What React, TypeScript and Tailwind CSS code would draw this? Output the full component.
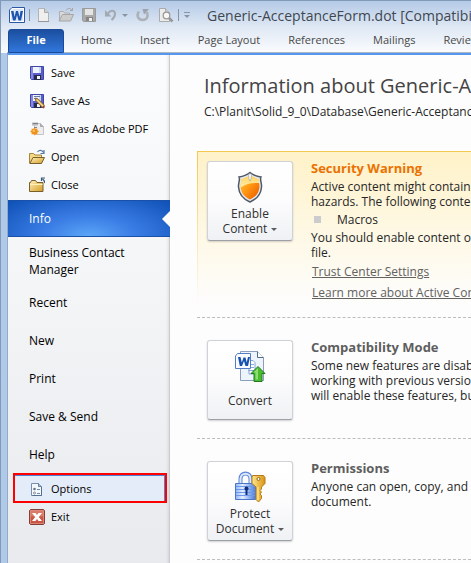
import type { ReactNode } from "react";

const tabs = ["Home", "Insert", "Page Layout", "References", "Mailings", "Review"];

function WordLogo() {
  return (
    <svg className="shrink-0" width="16" height="16" viewBox="0 0 16 16" aria-hidden="true">
      <path d="M3 .5h12.500v15H.5V3z" fill="#fff" stroke="#2b57a5" />
      <path d="M3.500 2H14v12H2V3.500z" fill="#dbe8fa" />
      <path d="M2 4h2.500l1 6 1.500-6h2l1.500 6 1-6H14l-2 9.500H9.500L8 8l-1.500 5.500H4z" fill="#1d55ae" />
    </svg>
  );
}

function NewIcon() {
  return (
    <svg width="16" height="16" viewBox="0 0 16 16" aria-hidden="true">
      <path d="M3.500 1.500h6l4 4v9h-10z" fill="#efefef" stroke="#b4b4b4" />
      <path d="M9.500 1.500v4h4" fill="#d0d0d0" stroke="#a9a9a9" />
      <path d="M3 14.500h11" stroke="#969696" />
    </svg>
  );
}

function GreyFolderIcon() {
  return (
    <svg width="16" height="16" viewBox="0 0 16 16" aria-hidden="true">
      <path d="M1.500 13.500v-9h4l1 1.500h5v3" fill="#dadada" stroke="#adadad" />
      <path d="M1 14l3.500-6.500h11l-3 6.500z" fill="#cccccc" stroke="#a5a5a5" />
      <path d="M8 3.500c2-3 5-2.500 6 0M12 3.500h2.500V1" fill="none" stroke="#a5a5a5" />
    </svg>
  );
}

function GreyDiskIcon() {
  return (
    <svg width="16" height="16" viewBox="0 0 16 16" aria-hidden="true">
      <path d="M1.500 1.500h13v13h-12l-1-1z" fill="#a9a9a9" stroke="#9a9a9a" />
      <path d="M4 2h8v6H4z" fill="#e4e4e4" />
      <path d="M5 10h7v4H5z" fill="#858585" />
      <path d="M8 11h3v3H8z" fill="#f0f0f0" />
    </svg>
  );
}

function UndoIcon() {
  return (
    <svg width="16" height="16" viewBox="0 0 16 16" aria-hidden="true">
      <path d="M3.500 7C6 3 10.500 2.500 11 6.500c.2 2.500-1 4.500-3.500 6.500" fill="none" stroke="#a3a9b1" strokeWidth="2" />
      <path d="M1 3v6.500h6.500z" fill="#a3a9b1" />
    </svg>
  );
}

function RedoIcon() {
  return (
    <svg width="16" height="16" viewBox="0 0 16 16" aria-hidden="true">
      <path d="M4 4.500C1 8 3 13 7.500 13c4.500 0 6.500-4 4-8" fill="none" stroke="#adb2b9" strokeWidth="2.500" />
      <path d="M7.500 2H14L9 7.500z" fill="#9da3ac" />
    </svg>
  );
}

function PreviewIcon() {
  return (
    <svg width="16" height="16" viewBox="0 0 16 16" aria-hidden="true">
      <path d="M1.500 1.500h6l4 4v9h-10z" fill="#ececec" stroke="#ababab" />
      <path d="M7.500 1.500v4h4" fill="#d0d0d0" stroke="#ababab" />
      <path d="M10.500 10.500l4 4" stroke="#989898" strokeWidth="2.500" />
      <circle cx="8.500" cy="8.500" r="3.300" fill="#f7f7f7" stroke="#9a9a9a" strokeWidth="1.300" />
    </svg>
  );
}

function Disk({ pencil = false }: { pencil?: boolean }) {
  return (
    <svg width="16" height="16" viewBox="0 0 16 16" aria-hidden="true">
      <path d="M1.500 1.500h13v13h-12l-1-1z" fill="#5b5ec8" stroke="#4146a6" />
      <path d="M2 2h2v12H2z" fill="#8589df" />
      <path d="M4 2h8v6H4z" fill="#eef3fc" />
      <path d="M10 2h2v6h-2z" fill="#c9d8ee" />
      <path d="M5 10h7v5H5z" fill="#272b50" />
      <path d="M8 11h3v3H8z" fill="#f4f4f4" />
      {pencil && (
        <g>
          <path d="M5 3.500h6M5 5.500h3" stroke="#667ba5" />
          <path d="M6 5l3 .8 6.500 6.500-2.200 2.200L6.800 8z" fill="#d9ae5c" stroke="#70531f" strokeWidth=".7" />
          <path d="M8 7l6 6" stroke="#f8dc8f" />
          <path d="M13 14.500l2-2 1 1.500-1.500 1.500z" fill="#9b403c" />
        </g>
      )}
    </svg>
  );
}

function PdfIcon() {
  return (
    <svg width="16" height="16" viewBox="0 0 16 16" aria-hidden="true">
      <path d="M5.500 2.500h6l3 3v8h-9z" fill="#ededee" stroke="#c4c4c8" />
      <path d="M11.500 2.500v3h3" fill="#b9babd" stroke="#a6a6aa" />
      <path d="M3 1.500h6v3H3z" fill="#b9b9bd" />
      <path d="M4 2.500h5M5 6.500h3" stroke="#818188" />
      <path d="M5.500 6.500l1 1.600 2-.6-.2 2 1.900 1-1.900 1 .2 2-2-.6-1 1.700-1-1.700-2 .6.200-2-1.900-1 1.900-1-.2-2 2 .6z" fill="#f7a529" />
      <circle cx="5.500" cy="10.500" r="3" fill="#ef9020" />
      <circle cx="4.800" cy="9.700" r="1.300" fill="#fbc361" />
    </svg>
  );
}

function Folder({ open = false }: { open?: boolean }) {
  return (
    <svg width="16" height="16" viewBox="0 0 16 16" aria-hidden="true">
      <defs>
        <linearGradient id="folder" x2="1" y2="1">
          <stop stopColor="#fff1bd" />
          <stop offset="1" stopColor="#d49d25" />
        </linearGradient>
      </defs>
      {open ? (
        <>
          <path d="M.5 14V4.500h4L6 6h6.500v4" fill="#f5d982" stroke="#a38443" />
          <path d="M.8 14.500L4 8.500h11.500l-3 6z" fill="url(#folder)" stroke="#79602a" />
          <path d="M8.500 3c2-2.500 4.500-2 6 .5M11.500 4.500H15V1" fill="none" stroke="#567ba9" strokeWidth="1.200" />
        </>
      ) : (
        <>
          <path d="M.5 14.500v-9h1l1-2h4l1.500 2h6v9z" fill="url(#folder)" stroke="#79602a" />
          <path d="M1 7.500h12.500" stroke="#fff0b9" />
          <path d="M15.500 6c.5-1.500 0-2.500-2-4M12.500 4V1H16" fill="none" stroke="#38597f" strokeWidth="1.200" />
        </>
      )}
    </svg>
  );
}

function OptionsIcon() {
  return (
    <svg width="16" height="16" viewBox="0 0 16 16" aria-hidden="true">
      <path d="M2.500 2.500h7l3 3v9h-10z" fill="#f5f9fd" stroke="#7890ad" />
      <path d="M9.500 2.500v3h3" fill="#adc0d7" stroke="#65809f" />
      <path d="M12.500 6v8.500h-9" fill="none" stroke="#536f91" />
      <circle cx="5.500" cy="8" r="1.300" fill="#66758a" />
      <circle cx="5.500" cy="12" r="1" fill="#fff" stroke="#66758a" strokeWidth=".8" />
      <path d="M8 8.500h3M8 12.500h3" stroke="#758aa3" />
    </svg>
  );
}

function ExitIcon() {
  return (
    <svg width="16" height="16" viewBox="0 0 16 16" aria-hidden="true">
      <path d="M1.500.5h13l1 1v13l-1 1h-13l-1-1v-13z" fill="#c95743" stroke="#853d37" />
      <path d="M1.500 1.500h13v6h-13z" fill="#d97b69" />
      <path d="M1.500 1.500h13v13h-13z" fill="none" stroke="#e6a092" strokeWidth=".6" />
      <path d="M3 4h3.500L8 6l1.500-2H13L9.800 8l3.200 4H9.500L8 10l-1.500 2H3l3.200-4z" fill="#fff" />
    </svg>
  );
}

function ShieldIcon() {
  return (
    <svg width="32" height="32" viewBox="0 0 32 32" aria-hidden="true">
      <defs>
        <linearGradient id="shield" x2="1" y2="1">
          <stop stopColor="#ffcf3a" />
          <stop offset=".5" stopColor="#ff9310" />
          <stop offset="1" stopColor="#e65500" />
        </linearGradient>
        <linearGradient id="shieldTop" x2="0" y2="1">
          <stop stopColor="#ffd35a" />
          <stop offset="1" stopColor="#ffedaa" />
        </linearGradient>
      </defs>
      <path d="M16 1.500c-3 2.500-7 4-11 4.500 1.500 3-1 6-.5 10C5 23 9 28 16 31c7-3 11-8 11.500-15 .5-4-2-7-.5-10-4-.5-8-2-11-4.500z" fill="#e6e8ee" stroke="#505968" strokeWidth="1.500" />
      <path d="M16 4c-3 2.500-6 3.800-9 4 .7 3-.8 5-.4 8.500C7 22 10.500 26 16 28.500c5.500-2.500 9-6.500 9.400-12 .4-3.500-1.100-5.500-.4-8.500-3-.2-6-1.500-9-4z" fill="url(#shield)" />
      <path d="M16 4c-3 2.500-6 3.800-9 4 .7 3-.8 5-.4 8.500 5.500-4 12-5 18.800-4.500-.5-1.500-.6-2.500-.4-4-3-.2-6-1.500-9-4z" fill="url(#shieldTop)" />
      <path d="M14.500 3h3l-.5 5-1 2-1-2z" fill="#fff" stroke="#939baa" strokeWidth=".6" />
    </svg>
  );
}

function ConvertIcon() {
  return (
    <svg width="32" height="32" viewBox="0 0 32 32" aria-hidden="true">
      <path d="M6.500 1.500h17l6 6v23h-23z" fill="#eef4fc" stroke="#8b9fbd" />
      <path d="M23.500 1.500v6h6" fill="#fff" stroke="#536985" />
      <path d="M15 10.500h4l2 2V24h-6z" fill="#fff" stroke="#83a4d3" />
      <path d="M17 14.500h3M17 17.500h3M14 20.500h6" stroke="#8aacda" />
      <path d="M3.500 3.500h13v15h-15V6z" fill="#f9fbff" stroke="#527fc4" />
      <path d="M4 7h2.500l1.300 5.500L9.500 7.500h2l1.200 5L14 7h2l-2 9h-2.500L10 11 8 16H5.800z" fill="#1651ad" />
      <path d="M24 16.500l7 7h-3v8h-8v-8h-3z" fill="#49bd2d" stroke="#217a22" />
      <path d="M24 18l-4.500 4.500h2v7H24z" fill="#91dd72" />
    </svg>
  );
}

function LockKeyIcon() {
  return (
    <svg width="32" height="32" viewBox="0 0 32 32" aria-hidden="true">
      <defs>
        <linearGradient id="lock">
          <stop stopColor="#8fb5fb" />
          <stop offset=".35" stopColor="#e4eeff" />
          <stop offset="1" stopColor="#477be0" />
        </linearGradient>
        <linearGradient id="key">
          <stop stopColor="#ffe88d" />
          <stop offset="1" stopColor="#d89410" />
        </linearGradient>
      </defs>
      <path d="M6.500 13V8c0-7.500 10-7.500 10 0v5" fill="none" stroke="#5c86d4" strokeWidth="4" />
      <path d="M6.500 13V8c0-7 10-7 10 0v5" fill="none" stroke="#dbe8ff" strokeWidth="2" />
      <path d="M1.500 12.500h20v16h-20z" fill="url(#lock)" stroke="#4a76c6" />
      <path d="M2 15.500h19M2 18.500h19M2 21.500h19M2 24.500h19" stroke="#6b98e7" />
      <circle cx="12.500" cy="17.500" r="2" fill="#102e7b" />
      <path d="M11.500 18h2v6h-2z" fill="#102e7b" />
      <path d="M18.500 4.500h11l1.500 2v6L27.500 16v2L26 19.500l1.500 1.500-1.500 2 1.500 1.500v3L24.500 31 22 28.500V16l-4-3.500v-6z" fill="url(#key)" stroke="#b57a1c" />
      <path d="M24 16v13" stroke="#fff0a0" />
      <circle cx="24.500" cy="8" r="1.500" fill="#fff" stroke="#9b6717" />
    </svg>
  );
}

function Caret() {
  return <span className="ml-1 inline-block border-x-[3px] border-t-[3px] border-x-transparent border-t-[#5b5b5b] align-middle" />;
}

function TileButton({ icon, children }: { icon: ReactNode; children: ReactNode }) {
  return (
    <button className="flex h-20 w-[86px] shrink-0 flex-col items-center justify-between rounded-[3px] border border-[#cfd2d7] border-b-[#9da1a7] bg-linear-to-b from-white via-[#fcfcfd] to-[#eff1f4] pt-[9px] pb-[3px] text-[12px] leading-[15px] text-[#303030] shadow-[0_1px_2px_#0000002e]">
      {icon}
      <span className="flex min-h-8 flex-col justify-center">{children}</span>
    </button>
  );
}

function Section({ title, icon, label, children }: { title: string; icon: ReactNode; label: ReactNode; children: ReactNode }) {
  return (
    <section className="flex h-[121px] gap-[18px] border-b border-dashed border-[#bdbdbd] pt-[22px] pl-[10px]">
      <TileButton icon={icon}>{label}</TileButton>
      <div>
        <h2 className="text-[13px] leading-[15px] font-bold text-[#5e5e5e]">{title}</h2>
        <p className="mt-[3px] leading-[15px]">{children}</p>
      </div>
    </section>
  );
}

function Command({ icon, label }: { icon: ReactNode; label: string }) {
  return (
    <button className="flex h-7 w-full items-center gap-[6px] pl-[21px] text-left">
      {icon}
      {label}
    </button>
  );
}

export default function App() {
  return (
    <div className="flex h-screen flex-col overflow-hidden border-t border-l border-[#8399b8] bg-[#afc9e8] pl-[6px] font-['Open_Sans','Noto_Sans',sans-serif] text-[12px] whitespace-nowrap text-[#262626]">
      <header className="-ml-[6px] shrink-0 bg-linear-to-b from-[#b4cae7] via-[#dfe8f4] to-[#fbfcfe] pl-[6px]">
        <div className="flex h-7 items-center pl-[2px]">
          <WordLogo />
          <span className="ml-1 h-3 w-px shrink-0 bg-[#8593a6]" />
          <div className="ml-[5px] flex shrink-0 items-center gap-[7px]">
            <button aria-label="New"><NewIcon /></button>
            <button aria-label="Open"><GreyFolderIcon /></button>
            <button aria-label="Save"><GreyDiskIcon /></button>
            <button aria-label="Undo" className="flex items-center gap-[2px]">
              <UndoIcon />
              <span className="border-x-[3px] border-t-[3px] border-x-transparent border-t-[#8895a8]" />
            </button>
            <button aria-label="Redo"><RedoIcon /></button>
            <button aria-label="Print Preview"><PreviewIcon /></button>
          </div>
          <span className="ml-1 h-3 w-px shrink-0 bg-[#8593a6]" />
          <button aria-label="Customize Quick Access Toolbar" className="ml-[5px] flex shrink-0 flex-col items-center gap-[2px]">
            <span className="h-px w-[6px] bg-[#8895a8]" />
            <span className="border-x-[3px] border-t-[3px] border-x-transparent border-t-[#8895a8]" />
          </button>
          <span className="ml-[17px] text-[14px] text-[#404750]">Generic-AcceptanceForm.dot [Compatibility</span>
        </div>
        <nav className="flex h-6 items-center gap-7 border-b border-[#aeb6c2] pl-px text-[11px] text-[#484848]">
          <button className="-mr-[11px] h-6 w-14 shrink-0 rounded-t-[3px] border border-[#1b4a9d] bg-linear-to-b from-[#1b4f9f] to-[#3177dc] font-bold text-white">File</button>
          {tabs.map((tab) => (
            <button key={tab} className="shrink-0">{tab}</button>
          ))}
        </nav>
      </header>
      <div className="flex min-h-0 flex-1 border-t-2 border-l border-t-[#5796ef] border-l-[#93a9c5] bg-[#fdfdfd]">
        <aside className="w-[162px] shrink-0 border-r border-[#c9cbcf] bg-linear-to-b from-[#fbfcfd] via-[#f2f4f6] to-[#e8eaed] pt-1 text-black shadow-[inset_-3px_0_3px_-2px_#0000001a]">
          <div className="text-[11px]">
            <Command icon={<Disk />} label="Save" />
            <Command icon={<Disk pencil />} label="Save As" />
            <Command icon={<PdfIcon />} label="Save as Adobe PDF" />
            <Command icon={<Folder open />} label="Open" />
            <Command icon={<Folder />} label="Close" />
          </div>
          <nav className="flex flex-col leading-[17px]">
            <button className="relative mt-px -mr-px h-[37px] border-y border-[#1950a8] bg-[radial-gradient(ellipse_at_50%_100%,#5ba6f7_0%,#3a7de5_40%,#0e50b5_100%)] pl-[21px] text-left text-white">
              Info
              <span className="absolute top-[10px] right-0 border-y-8 border-r-8 border-y-transparent border-r-[#fdfdfd]" />
            </button>
            <button className="h-[46px] pt-px pl-[21px] text-left">Business Contact<br />Manager</button>
            <button className="h-[38px] pl-[21px] text-left">Recent</button>
            <button className="h-[38px] pl-[21px] text-left">New</button>
            <button className="h-[38px] pl-[21px] text-left">Print</button>
            <button className="h-[38px] pl-[21px] text-left">Save &amp; Send</button>
            <button className="h-[38px] pl-[21px] text-left">Help</button>
          </nav>
          <div className="text-[11px]">
            <div className="mr-[2px] ml-[5px] h-[30px] border-2 border-[#fe0000]">
              <button className="flex h-[26px] w-full items-center gap-[6px] border-t border-r border-[#5280d4] bg-linear-to-b from-[#e3ecf8] to-[#e3edf9] pt-px pl-[14px]">
                <OptionsIcon />
                Options
              </button>
            </div>
            <Command icon={<ExitIcon />} label="Exit" />
          </div>
        </aside>
        <main className="min-w-0 flex-1 overflow-hidden pl-[27px]">
          <h1 className="mt-[17px] pl-[7px] text-[20px] leading-[28px] text-[#444]">Information about Generic-Acceptance</h1>
          <p className="mt-1 pl-[7px] leading-4">C:\Planit\Solid_9_0\Database\Generic-AcceptanceForm</p>
          <div className="mt-[31px] border-b border-dashed border-[#bdbdbd] pb-3">
            <section className="flex h-[154px] gap-[18px] border-t border-l border-t-[#f3c84f] bg-linear-to-b from-[#fff2c8] to-[#fdfdfd] pt-[9px] pl-[9px] [border-left-color:transparent] [border-image:linear-gradient(to_bottom,#f3c84f,#fdfdfd)_1]">
              <TileButton icon={<ShieldIcon />}>
                <span>Enable</span>
                <span>Content<Caret /></span>
              </TileButton>
              <div className="leading-[15px]">
                <h2 className="text-[13px] leading-[15px] font-bold text-[#eb7100]">Security Warning</h2>
                <p className="mt-[3px]">Active content might contain viruses<br />hazards. The following content</p>
                <ul className="my-[3px]">
                  <li className="flex items-center gap-4 pl-[3px]"><span className="size-[7px] bg-[#cccccf]" />Macros</li>
                </ul>
                <p>You should enable content only<br />file.</p>
                <div className="mt-1 flex flex-col items-start gap-[6px] pl-px text-[#62625f]">
                  <a href="#trust" className="underline">Trust Center Settings</a>
                  <a href="#learn" className="underline">Learn more about Active Content</a>
                </div>
              </div>
            </section>
          </div>
          <Section title="Compatibility Mode" icon={<ConvertIcon />} label="Convert">
            Some new features are disabled<br />working with previous versions<br />will enable these features, but may
          </Section>
          <Section title="Permissions" icon={<LockKeyIcon />} label={<><span>Protect</span><span>Document<Caret /></span></>}>
            Anyone can open, copy, and change<br />document.
          </Section>
        </main>
      </div>
    </div>
  );
}
